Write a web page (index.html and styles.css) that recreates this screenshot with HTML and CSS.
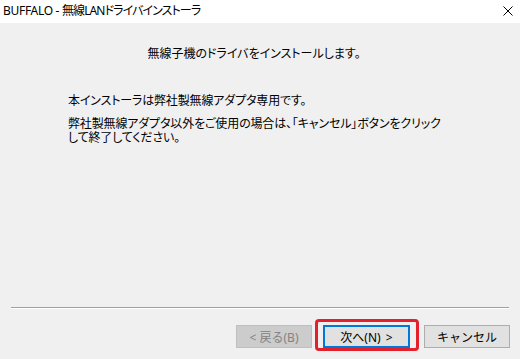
FILE: index.html
```html
<!DOCTYPE html>
<html lang="ja">
<head>
<meta charset="utf-8">
<title>BUFFALO - 無線LANドライバインストーラ</title>
<link rel="stylesheet" href="styles.css">
</head>
<body>
<div class="window">
  <div class="titlebar">
    <span class="title">BUFFALO - <span class="title-ja">無線LANドライバインストーラ</span></span>
    <span class="close" aria-label="閉じる">
      <svg width="10" height="10" viewBox="0 0 10 10"><path d="M0.5 0.5 L9.5 9.5 M9.5 0.5 L0.5 9.5" stroke="#000" stroke-width="1" fill="none"/></svg>
    </span>
  </div>
  <div class="content">
    <p class="heading">無線子機のドライバをインストールします。</p>
    <div class="body">
      <p class="para">本インストーラは弊社製無線アダプタ専用です。</p>
      <p class="para">弊社製無線アダプタ以外をご使用の場合は、「キャンセル」ボタンをクリック<br>して終了してください。</p>
    </div>
  </div>
  <div class="separator"></div>
  <div class="footer">
    <button class="btn btn-back" disabled>&lt; 戻る(B)</button>
    <button class="btn btn-next">次へ(N) &gt;<span class="highlight"></span></button>
    <button class="btn btn-cancel">キャンセル</button>
  </div>
</div>
</body>
</html>
```

FILE: styles.css
```css
html, body {
  margin: 0;
  padding: 0;
}
body {
  width: 520px;
  height: 359px;
  overflow: hidden;
  background: #f0f0f0;
}
.window {
  display: flex;
  flex-direction: column;
  height: 359px;
}
.titlebar {
  height: 23px;
  background: #ffffff;
  display: flex;
  align-items: center;
  justify-content: space-between;
  padding: 0 7px 0 3px;
  font-family: "Noto Sans", "Noto Sans CJK JP", sans-serif;
  font-size: 12px;
  color: #000;
}
.title {
  line-height: 16px;
  position: relative;
  top: -1px;
  letter-spacing: -0.3px;
  font-feature-settings: "palt";
}
.title-ja {
  letter-spacing: -0.9px;
}
.close {
  display: flex;
  width: 10px;
  height: 10px;
  position: relative;
  top: -1px;
}
.content {
  height: 284px;
  font-family: "Noto Sans CJK JP", sans-serif;
  font-size: 12px;
  line-height: 14px;
  color: #000;
  font-feature-settings: "palt";
}
.heading {
  margin: 23px 0 0 0;
  text-align: center;
  padding-right: 12px;
}
.body {
  padding-left: 68px;
  margin-top: 33px;
  display: flex;
  flex-direction: column;
  gap: 9px;
  letter-spacing: -0.15px;
}
.para {
  margin: 0;
}
.separator {
  margin: 0 11px;
  height: 1px;
  background: #a0a0a0;
  border-bottom: 1px solid #ffffff;
}
.footer {
  display: flex;
  padding: 16px 0 0 236px;
}
.btn {
  height: 23px;
  padding: 0;
  box-sizing: border-box;
  font-family: "Noto Sans", "Noto Sans CJK JP", sans-serif;
  font-size: 12px;
  color: #000;
  background: #e1e1e1;
  border: 1px solid #adadad;
  border-radius: 0;
  position: relative;
}
.btn-back {
  width: 76px;
  background: #cccccc;
  border-color: #bfbfbf;
  color: #838383;
}
.btn-next {
  width: 87px;
  margin-left: 11px;
  border: 2px solid #0078d7;
  word-spacing: 2px;
}
.btn-cancel {
  width: 86px;
  margin-left: 14px;
}
.highlight {
  position: absolute;
  left: -10px;
  top: -8px;
  right: -11px;
  bottom: -5px;
  border: 3px solid #e4202c;
  border-radius: 4px;
  pointer-events: none;
}
```
